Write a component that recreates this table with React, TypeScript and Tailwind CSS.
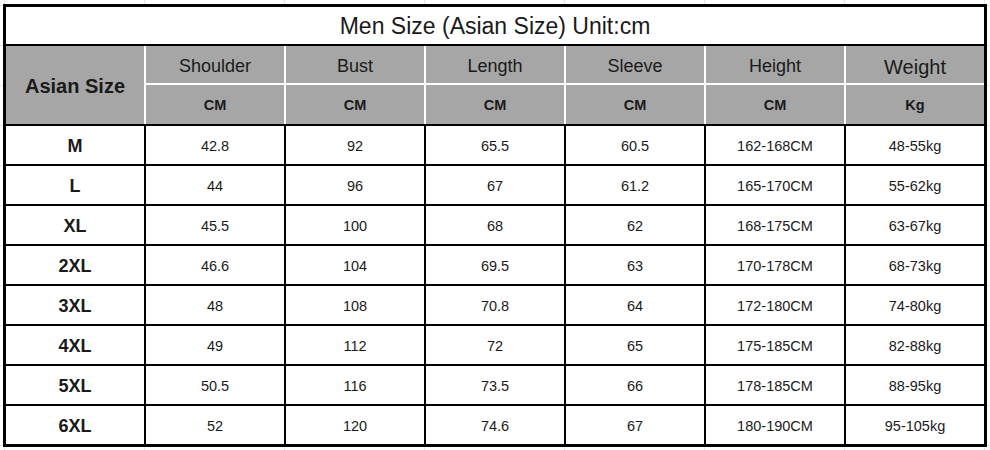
const columns = [
  { name: "Shoulder", unit: "CM" },
  { name: "Bust", unit: "CM" },
  { name: "Length", unit: "CM" },
  { name: "Sleeve", unit: "CM" },
  { name: "Height", unit: "CM" },
  { name: "Weight", unit: "Kg" },
];

const rows = [
  ["M", "42.8", "92", "65.5", "60.5", "162-168CM", "48-55kg"],
  ["L", "44", "96", "67", "61.2", "165-170CM", "55-62kg"],
  ["XL", "45.5", "100", "68", "62", "168-175CM", "63-67kg"],
  ["2XL", "46.6", "104", "69.5", "63", "170-178CM", "68-73kg"],
  ["3XL", "48", "108", "70.8", "64", "172-180CM", "74-80kg"],
  ["4XL", "49", "112", "72", "65", "175-185CM", "82-88kg"],
  ["5XL", "50.5", "116", "73.5", "66", "178-185CM", "88-95kg"],
  ["6XL", "52", "120", "74.6", "67", "180-190CM", "95-105kg"],
];

export default function App() {
  return (
    <div
      className="w-[990px] h-[450px] bg-white pt-[4px] pl-[3px] text-[#1a1a1a] bg-[linear-gradient(to_right,#e4e4e4_1px,transparent_1px),linear-gradient(to_bottom,#e4e4e4_1px,transparent_1px)] bg-[size:140px_40px] bg-[position:4px_5px]"
      style={{ fontFamily: '"Liberation Sans", Arial, sans-serif' }}
    >
      <div className="w-[984px] border-[3px] border-black bg-white">
        {/* title */}
        <div className="h-[39px] pt-[1px] flex items-center justify-center text-[23px] border-b-2 border-black">
          Men Size (Asian Size) Unit:cm
        </div>

        {/* header */}
        <div className="flex h-[80px] bg-[#a6a6a6] border-b-2 border-black">
          <div className="w-[138px] pt-[2px] flex items-center justify-center text-[20px] font-bold">
            Asian Size
          </div>
          {columns.map((c) => (
            <div key={c.name} className="w-[140px] flex flex-col border-l-2 border-white">
              <div
                className={`h-[39px] pt-[4px] flex items-center justify-center border-b-2 border-white ${
                  c.name === "Weight" ? "text-[20px]" : "text-[18px]"
                }`}
              >
                {c.name}
              </div>
              <div className="h-[39px] pt-[2px] flex items-center justify-center text-[14.5px] font-bold">
                {c.unit}
              </div>
            </div>
          ))}
        </div>

        {/* body */}
        {rows.map((r, ri) => (
          <div
            key={r[0]}
            className={`flex h-[38px] ${ri < rows.length - 1 ? "box-content border-b-2 border-black" : ""}`}
          >
            <div className="w-[138px] pt-[3px] flex items-center justify-center text-[18px] font-bold">{r[0]}</div>
            {r.slice(1).map((v, ci) => (
              <div
                key={ci}
                className="w-[140px] pt-[3px] flex items-center justify-center text-[14.5px] border-l-2 border-black"
              >
                {v}
              </div>
            ))}
          </div>
        ))}
      </div>
    </div>
  );
}
